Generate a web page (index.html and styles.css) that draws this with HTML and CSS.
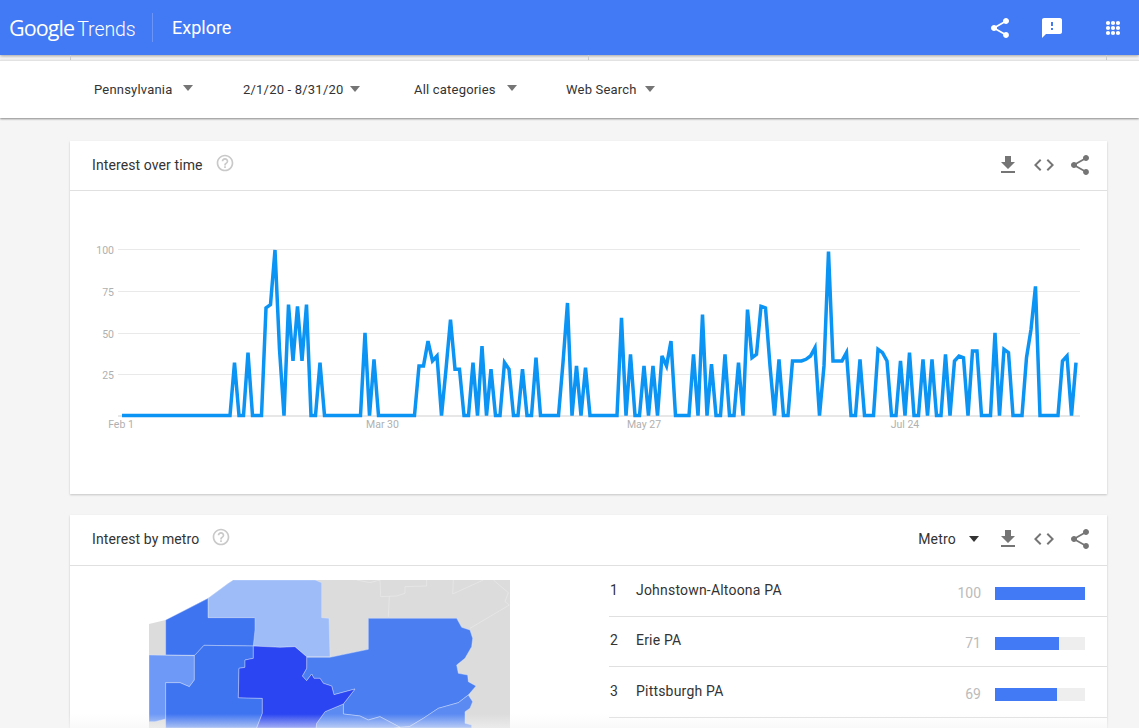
FILE: index.html
```
<!DOCTYPE html>
<html lang="en">
<head>
<meta charset="utf-8">
<title>Google Trends - Explore</title>
<link rel="stylesheet" href="styles.css">
</head>
<body>
<header class="topbar">
  <div class="logo"><span class="logo-google">Google</span><span class="logo-trends">Trends</span></div>
  <div class="topbar-divider"></div>
  <div class="topbar-title">Explore</div>
  <div class="topbar-actions">
    <svg class="icon-white" width="24" height="24" viewBox="0 0 24 24"><path d="M18 16.08c-.76 0-1.44.3-1.96.77L8.91 12.7c.05-.23.09-.46.09-.7s-.04-.47-.09-.7l7.05-4.11c.54.5 1.25.81 2.04.81 1.66 0 3-1.34 3-3s-1.34-3-3-3-3 1.34-3 3c0 .24.04.47.09.7L8.04 9.81C7.5 9.31 6.79 9 6 9c-1.66 0-3 1.34-3 3s1.34 3 3 3c.79 0 1.5-.31 2.04-.81l7.12 4.16c-.05.21-.08.43-.08.65 0 1.61 1.31 2.92 2.92 2.92 1.61 0 2.92-1.31 2.92-2.92s-1.31-2.92-2.92-2.92z"/></svg>
    <svg class="icon-white" width="24" height="24" viewBox="0 0 24 24"><path d="M20 2H4c-1.1 0-1.99.9-1.99 2L2 22l4-4h14c1.1 0 2-.9 2-2V4c0-1.1-.9-2-2-2zm-7 12h-2v-2h2v2zm0-4h-2V6h2v4z"/></svg>
    <svg class="icon-white icon-apps" width="24" height="24" viewBox="0 0 24 24"><circle cx="7" cy="7" r="2.1"/><circle cx="12" cy="7" r="2.1"/><circle cx="17" cy="7" r="2.1"/><circle cx="7" cy="12" r="2.1"/><circle cx="12" cy="12" r="2.1"/><circle cx="17" cy="12" r="2.1"/><circle cx="7" cy="17" r="2.1"/><circle cx="12" cy="17" r="2.1"/><circle cx="17" cy="17" r="2.1"/></svg>
  </div>
</header>

<div class="strip"><div class="strip-cell"></div><div class="strip-cell"></div></div>

<nav class="filters">
  <div class="filter filter-geo"><span>Pennsylvania</span><i class="caret"></i></div>
  <div class="filter filter-date"><span>2/1/20 - 8/31/20</span><i class="caret"></i></div>
  <div class="filter filter-cat"><span>All categories</span><i class="caret"></i></div>
  <div class="filter filter-type"><span>Web Search</span><i class="caret"></i></div>
</nav>

<main class="content">
  <section class="card">
    <div class="card-header">
      <h2 class="card-title">Interest over time</h2>
      <svg class="icon-help" width="20" height="20" viewBox="0 0 24 24"><path d="M11 18h2v-2h-2v2zm1-16C6.48 2 2 6.48 2 12s4.48 10 10 10 10-4.48 10-10S17.52 2 12 2zm0 18c-4.41 0-8-3.59-8-8s3.59-8 8-8 8 3.59 8 8-3.59 8-8 8zm0-14c-2.21 0-4 1.79-4 4h2c0-1.1.9-2 2-2s2 .9 2 2c0 2-3 1.75-3 5h2c0-2.25 3-2.5 3-5 0-2.21-1.79-4-4-4z"/></svg>
      <div class="card-actions">
        <svg class="icon-grey" width="24" height="24" viewBox="0 0 24 24"><path d="M19 9h-4V3H9v6H5l7 7 7-7zM5 18v2h14v-2H5z"/></svg>
        <svg class="icon-grey" width="24" height="24" viewBox="0 0 24 24"><path d="M9.4 16.6L4.8 12l4.6-4.6L8 6l-6 6 6 6 1.4-1.4zm5.2 0l4.6-4.6-4.6-4.6L16 6l6 6-6 6-1.4-1.4z"/></svg>
        <svg class="icon-grey" width="24" height="24" viewBox="0 0 24 24"><path d="M18 16.08c-.76 0-1.44.3-1.96.77L8.91 12.7c.05-.23.09-.46.09-.7s-.04-.47-.09-.7l7.05-4.11c.54.5 1.25.81 2.04.81 1.66 0 3-1.34 3-3s-1.34-3-3-3-3 1.34-3 3c0 .24.04.47.09.7L8.04 9.81C7.5 9.31 6.79 9 6 9c-1.66 0-3 1.34-3 3s1.34 3 3 3c.79 0 1.5-.31 2.04-.81l7.12 4.16c-.05.21-.08.43-.08.65 0 1.61 1.31 2.92 2.92 2.92 1.61 0 2.92-1.31 2.92-2.92s-1.31-2.92-2.92-2.92z"/></svg>
      </div>
    </div>
    <svg class="chart" width="1037" height="303" viewBox="70 191 1037 303">
      <g class="grid">
        <line x1="118" y1="249.5" x2="1080" y2="249.5"/>
        <line x1="118" y1="291.5" x2="1080" y2="291.5"/>
        <line x1="118" y1="333.5" x2="1080" y2="333.5"/>
        <line x1="118" y1="374.5" x2="1080" y2="374.5"/>
        <line class="baseline" x1="118" y1="416" x2="1080" y2="416"/>
      </g>
      <g class="axis">
        <text class="axis-y" x="114" y="254">100</text>
        <text class="axis-y" x="114" y="296">75</text>
        <text class="axis-y" x="114" y="338">50</text>
        <text class="axis-y" x="114" y="379">25</text>
        <text class="axis-x" x="121" y="428">Feb 1</text>
        <text class="axis-x" x="382.500" y="428">Mar 30</text>
        <text class="axis-x" x="644" y="428">May 27</text>
        <text class="axis-x" x="905" y="428">Jul 24</text>
      </g>
      <g transform="translate(122 415.6) scale(4.5 -1.656)">
        <polyline class="trend" points="0,0 24,0 25,32 26,0 27,0 28,38 29,0 30,0 31,0 32,65 33,67 34,100 35,40 36,0 37,67 38,33 39,66 40,33 41,67 42,0 43,0 44,32 45,0 53,0 54,50 55,0 56,34 57,0 65,0 66,30 67,30 68,45 69,33 70,36 71,0 72,28 73,58 74,28 75,28 76,0 77,0 78,32 79,0 80,42 81,0 82,28 83,0 84,0 85,32 86,28 87,0 88,0 89,28 90,0 91,0 92,35 93,0 97,0 98,32 99,68 100,0 101,30 102,0 103,29 104,0 110,0 111,59 112,0 113,37 114,0 115,0 116,30 117,0 118,30 119,0 120,36 121,30 122,45 123,0 126,0 127,37 128,0 129,61 130,0 131,31 132,0 133,0 134,37 135,0 136,0 137,32 138,0 139,64 140,35 141,37 142,66 143,65 144,30 145,0 146,34 147,0 148,0 149,33 150,33 151,33 152,34 153,36 154,41 155,0 156,30 157,99 158,33 159,33 160,33 161,38 162,0 163,0 164,34 165,0 166,0 167,0 168,40 169,38 170,33 171,0 172,0 173,33 174,0 175,38 176,0 177,0 178,34 179,0 180,34 181,0 182,0 183,37 184,0 185,33 186,36 187,35 188,0 189,39 190,39 191,0 192,0 193,0 194,50 195,0 196,40 197,38 198,0 199,0 200,0 201,35 202,52 203,78 204,0 208,0 209,33 210,36 211,0 212,32"/>
      </g>
    </svg>
  </section>

  <section class="card card-metro">
    <div class="card-header">
      <h2 class="card-title">Interest by metro</h2>
      <svg class="icon-help" width="20" height="20" viewBox="0 0 24 24"><path d="M11 18h2v-2h-2v2zm1-16C6.48 2 2 6.48 2 12s4.48 10 10 10 10-4.48 10-10S17.52 2 12 2zm0 18c-4.41 0-8-3.59-8-8s3.59-8 8-8 8 3.59 8 8-3.59 8-8 8zm0-14c-2.21 0-4 1.79-4 4h2c0-1.1.9-2 2-2s2 .9 2 2c0 2-3 1.75-3 5h2c0-2.25 3-2.5 3-5 0-2.21-1.79-4-4-4z"/></svg>
      <div class="card-actions">
        <div class="metro-select"><span>Metro</span><i class="caret caret-dark"></i></div>
        <svg class="icon-grey" width="24" height="24" viewBox="0 0 24 24"><path d="M19 9h-4V3H9v6H5l7 7 7-7zM5 18v2h14v-2H5z"/></svg>
        <svg class="icon-grey" width="24" height="24" viewBox="0 0 24 24"><path d="M9.4 16.6L4.8 12l4.6-4.6L8 6l-6 6 6 6 1.4-1.4zm5.2 0l4.6-4.6-4.6-4.6L16 6l6 6-6 6-1.4-1.4z"/></svg>
        <svg class="icon-grey" width="24" height="24" viewBox="0 0 24 24"><path d="M18 16.08c-.76 0-1.44.3-1.96.77L8.91 12.7c.05-.23.09-.46.09-.7s-.04-.47-.09-.7l7.05-4.11c.54.5 1.25.81 2.04.81 1.66 0 3-1.34 3-3s-1.34-3-3-3-3 1.34-3 3c0 .24.04.47.09.7L8.04 9.81C7.5 9.31 6.79 9 6 9c-1.66 0-3 1.34-3 3s1.34 3 3 3c.79 0 1.5-.31 2.04-.81l7.12 4.16c-.05.21-.08.43-.08.65 0 1.61 1.31 2.92 2.92 2.92 1.61 0 2.92-1.31 2.92-2.92s-1.31-2.92-2.92-2.92z"/></svg>
      </div>
    </div>
    <div class="metro-body">
      <div class="map-col">
        <svg class="map" width="361" height="148" viewBox="57 30 1083 444">
          <polygon class="land" points="57,162 107,150 170,118 234,85 295,40 310,30 1140,30 1140,474 57,474"/>
          <g class="state-lines">
            <polyline points="680,30 720,38 750,30"/>
            <polyline points="750,30 752,80 800,78 825,70 825,50 890,48 890,30"/>
            <polyline points="778,80 775,140"/>
            <polyline points="970,30 968,72 1060,30"/>
            <polyline points="1090,30 1135,68 1125,95 1138,105 1020,175"/>
          </g>
          <g class="regions">
            <polygon class="r-light" points="295,40 310,30 555,30 575,38 575,143 597,145 600,260 530,260 495,230 450,232 370,228 372,143 234,143 234,85"/>
            <polygon class="r-mid" points="107,150 170,118 234,85 234,143 375,143 375,180 370,228 222,226 195,256 107,255"/>
            <polygon class="r-pale" points="57,255 193,257 193,330 178,350 150,338 107,338 107,447 75,455 57,455"/>
            <polygon class="r-mid" points="107,338 150,338 178,350 193,330 193,257 222,226 370,228 370,265 345,270 345,292 327,295 325,383 397,385 397,430 380,474 107,474"/>
            <polygon class="r-ne" points="715,145 980,145 995,172 1020,180 1028,205 1025,230 1005,265 980,285 985,310 1013,315 1015,335 1038,348 1015,375 985,398 925,415 880,445 838,470 810,472 750,440 715,450 690,438 640,432 640,402 675,357 612,374 605,348 580,340 570,325 552,325 545,312 530,332 517,318 530,295 530,262 600,262 715,238"/>
            <polygon class="r-se" points="640,402 640,432 690,438 715,450 750,440 810,472 790,474 558,474 560,460 585,425"/>
            <polygon class="r-se" points="810,472 838,470 880,445 925,415 985,398 1015,375 1028,395 1020,415 1005,425 1005,460 1025,465 1025,474 810,474"/>
            <polygon class="r-dark" points="370,228 450,232 495,230 530,260 530,295 517,318 530,332 545,312 552,325 570,325 580,340 605,348 612,374 675,357 640,402 585,425 560,460 558,474 380,474 397,430 397,385 325,383 327,295 345,292 345,270 370,265"/>
          </g>
        </svg>
      </div>
      <ol class="rank-list">
        <li class="rank-row">
          <span class="rank-num">1</span><span class="rank-name">Johnstown-Altoona PA</span>
          <span class="rank-value">100</span><span class="rank-bar"><span class="rank-fill" style="width:100%"></span></span>
        </li>
        <li class="rank-row">
          <span class="rank-num">2</span><span class="rank-name">Erie PA</span>
          <span class="rank-value">71</span><span class="rank-bar"><span class="rank-fill" style="width:71%"></span></span>
        </li>
        <li class="rank-row">
          <span class="rank-num">3</span><span class="rank-name">Pittsburgh PA</span>
          <span class="rank-value">69</span><span class="rank-bar"><span class="rank-fill" style="width:69%"></span></span>
        </li>
      </ol>
    </div>
  </section>
</main>
<div class="bottom-fade"></div>
</body>
</html>
```

FILE: styles.css
```
* { box-sizing: border-box; }
html, body { height: 728px; overflow: hidden; }
body {
  margin: 0;
  background: #f5f5f5;
  font-family: Roboto, "Liberation Sans", sans-serif;
  color: #333;
  position: relative;
}

/* top bar */
.topbar {
  height: 55px;
  background: #4279f5;
  color: #fff;
  display: flex;
  align-items: center;
  padding-left: 9px;
  box-shadow: 0 1px 3px rgba(0,0,0,.35);
  position: relative;
}
.logo { display: flex; align-items: baseline; gap: 3px; width: 143px; font-family: "Open Sans", Roboto, sans-serif; }
.logo-google { font-size: 21.500px; font-weight: 400; letter-spacing: -.9px; }
.logo-trends { font-family: Roboto, sans-serif; font-size: 19.500px; font-weight: 300; letter-spacing: -.1px; }
.topbar-divider { width: 1px; height: 29px; background: rgba(255,255,255,.22); }
.topbar-title { margin-left: 19px; font-size: 18px; line-height: 24px; }
.topbar-actions { margin-left: auto; display: flex; align-items: center; gap: 28px; padding-right: 14px; }
.icon-apps { margin-left: 9px; }
.icon-white { fill: #fff; display: block; }

/* sliver below top bar */
.strip {
  height: 5px;
  margin: 0 32px 0 70px;
  display: flex;
  position: relative;
  border-left: 1px solid #ccc;
  border-right: 1px solid #ccc;
}
.strip-cell { flex: 1; }
.strip-cell + .strip-cell { border-left: 1px solid #ccc; }

/* filters */
.filters {
  height: 58px;
  background: #fff;
  border-top: 1px solid #e2e2e2;
  box-shadow: 0 1px 2px rgba(0,0,0,.45);
  display: flex;
  align-items: center;
  font-size: 13px;
  color: #333;
  padding-left: 94px;
  position: relative;
}
.filter { display: flex; align-items: center; line-height: 16px; letter-spacing: .2px; }
.filter-geo { width: 149px; gap: 11px; }
.filter-date { width: 171px; gap: 7px; padding-top: 1px; }
.filter-cat { width: 152px; gap: 11px; }
.filter-type { gap: 8px; padding-top: 1px; }
.caret {
  display: block;
  width: 0; height: 0;
  margin-top: -3px;
  border-left: 5px solid transparent;
  border-right: 5px solid transparent;
  border-top: 6px solid #757575;
}
.caret-dark { border-top-color: #333; margin-top: 1px; }

/* cards */
.content { padding: 23px 32px 0 70px; }
.card { background: #fff; box-shadow: 0 1px 2px rgba(0,0,0,.2); }
.card-metro { margin-top: 21px; }
.card-header {
  height: 50px;
  border-bottom: 1px solid #e0e0e0;
  display: flex;
  align-items: center;
  padding: 0 15px 2px 22px;
}
.card-metro .card-header { height: 51px; padding-bottom: 3px; }
.card-title { margin: 0; font-size: 14px; font-weight: 400; color: #333; letter-spacing: .1px; }
.icon-help { fill: #c9c9c9; margin-left: 12px; margin-top: -3px; display: block; }
.card-actions { margin-left: auto; display: flex; align-items: center; gap: 12px; }
.icon-grey { fill: #757575; display: block; }
.chart { display: block; }

.grid line { stroke: #e9e9e9; stroke-width: 1; }
.grid .baseline { stroke: #cfcfcf; }
.axis text { font-family: Roboto, sans-serif; font-size: 10.500px; fill: #b0b0b0; }
.axis-y { text-anchor: end; }
.axis-x { text-anchor: middle; }
.trend {
  fill: none;
  stroke: #0b94f3;
  stroke-width: 3.500;
  stroke-linejoin: miter;
  vector-effect: non-scaling-stroke;
}

/* metro */
.metro-select { display: flex; align-items: center; gap: 13px; font-size: 14px; letter-spacing: .2px; color: #333; margin-right: 5px; }
.metro-body { display: flex; }
.map-col { width: 539px; padding: 14px 0 0 79px; }
.map { display: block; }
.land { fill: #dcdcdc; }
.state-lines polyline { fill: none; stroke: #efefef; stroke-width: 1.500; }
.regions polygon { stroke: #dfe8fc; stroke-width: 1.200; }
.r-light { fill: #9dbcf8; }
.r-mid { fill: #3f74f1; }
.r-pale { fill: #6e99f6; }
.r-ne { fill: #4a7ef1; }
.r-se { fill: #5b8af3; }
.r-dark { fill: #2a45f1; }

.rank-list { list-style: none; margin: 0; padding: 0; flex: 1; }
.rank-row {
  height: 50.500px;
  border-bottom: 1px solid #e0e0e0;
  display: flex;
  align-items: center;
  padding: 0 22px 0 1px;
  font-size: 14px;
  color: #333;
}
.rank-num { width: 26px; margin-top: -2px; }
.rank-name { margin-top: -2px; letter-spacing: .2px; }
.rank-value { margin-left: auto; color: #bbb; margin-top: 4px; }
.rank-bar { width: 90px; height: 13px; margin-left: 14px; background: #eee; margin-top: 5px; display: block; }
.rank-fill { display: block; height: 100%; background: #4279f5; }

.bottom-fade {
  position: absolute;
  left: 0; right: 0; bottom: 0;
  height: 14px;
  background: linear-gradient(rgba(245,245,245,0), rgba(245,245,245,.6));
}
```
